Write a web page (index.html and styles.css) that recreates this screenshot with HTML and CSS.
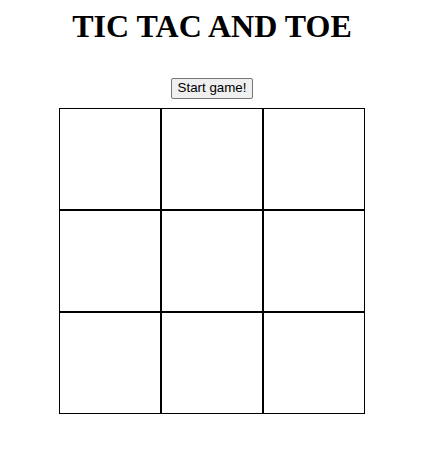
FILE: index.html
```html
<!DOCTYPE html>
<html lang="en">
<head>
    <meta charset="UTF-8">
    <title>Tic Tac Toe</title>
    <link rel="stylesheet" href="styles.css">
</head>
<body>
    <div class="game">
        <h1 class="title">TIC TAC AND TOE</h1>
        <div class="controls">
            <button type="button" id="startBtn">Start game!</button>
        </div>
        <div class="board" id="board">
            <div class="cell"></div>
            <div class="cell"></div>
            <div class="cell"></div>
            <div class="cell"></div>
            <div class="cell"></div>
            <div class="cell"></div>
            <div class="cell"></div>
            <div class="cell"></div>
            <div class="cell"></div>
        </div>
    </div>
</body>
</html>
```
FILE: styles.css
```css
body {
    font-family: "Liberation Serif", "Times New Roman", serif;
    margin: 0;
    background: #fff;
}
.game {
    width: 424px;
    padding-top: 8px;
    text-align: center;
}
.title {
    font-size: 32px;
    font-weight: bold;
    margin: 0;
    line-height: 37px;
}
.controls {
    display: flex;
    justify-content: center;
    align-items: flex-start;
    margin-top: 33px;
    height: 30px;
}
.controls button {
    font-family: "Liberation Sans", Arial, sans-serif;
    font-size: 13.33px;
    line-height: 15px;
    color: #000;
    background: #efefef;
    border: 1px solid #767676;
    border-radius: 2px;
    padding: 0 6px 2px;
    height: 21px;
}
.board {
    display: flex;
    flex-wrap: wrap;
    width: 306px;
    margin: 0 auto;
}
.cell {
    width: 100px;
    height: 100px;
    border: 1px solid #000;
}
```
